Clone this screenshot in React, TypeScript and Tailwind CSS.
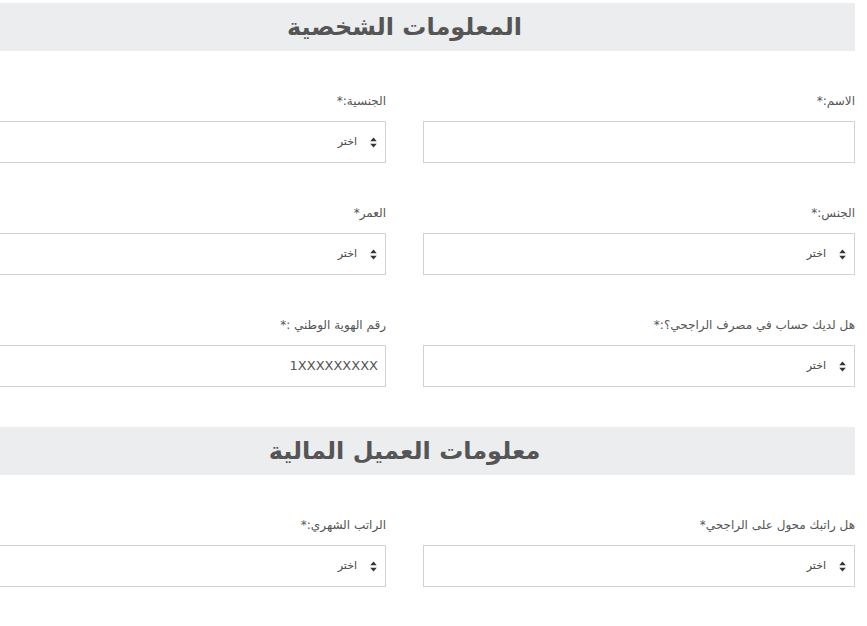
import React from "react";

const font = { fontFamily: '"DejaVu Sans", "Noto Sans", sans-serif' };

function SortIcon() {
  return (
    <svg width="7" height="11" viewBox="0 0 7 11" className="shrink-0">
      <path d="M3.5 0.5 L6.8 4.3 L0.2 4.3 Z" fill="#333" />
      <path d="M3.5 10.5 L6.8 6.7 L0.2 6.7 Z" fill="#333" />
    </svg>
  );
}

function Field({
  label,
  kind,
  value,
}: {
  label: string;
  kind: "text" | "select";
  value?: string;
}) {
  return (
    <div className="flex flex-col gap-[10px]">
      <label className="text-[12px] leading-[20px] text-[#555]">{label}</label>
      {kind === "select" ? (
        <div className="h-[42px] border border-[#d0d3d6] bg-white flex items-center gap-[13px] pr-[8px]">
          <SortIcon />
          <span className="text-[11px] text-[#444]">اختر</span>
        </div>
      ) : (
        <div className="h-[42px] border border-[#d0d3d6] bg-white flex items-center pr-[7px]">
          <span className="text-[13px] text-[#555]">{value}</span>
        </div>
      )}
    </div>
  );
}

function SectionTitle({ title }: { title: string }) {
  return (
    <div className="h-[48px] bg-[#ecedef] flex items-center justify-center">
      <h2 className="text-[24px] font-bold text-[#555]">{title}</h2>
    </div>
  );
}

export default function App() {
  return (
    <div dir="rtl" className="w-full min-h-[626px] bg-white overflow-hidden" style={font}>
      <div className="w-[901px] mr-[12px] pt-[3px] flex flex-col gap-10">
        <SectionTitle title="المعلومات الشخصية" />
        <div className="grid grid-cols-2 gap-x-[37px] gap-y-10">
          <Field label="الاسم:*" kind="text" />
          <Field label="الجنسية:*" kind="select" />
          <Field label="الجنس:*" kind="select" />
          <Field label="العمر*" kind="select" />
          <Field label="هل لديك حساب في مصرف الراجحي؟:*" kind="select" />
          <Field label="رقم الهوية الوطني :*" kind="text" value="1XXXXXXXXX" />
        </div>
        <SectionTitle title="معلومات العميل المالية" />
        <div className="grid grid-cols-2 gap-x-[37px] gap-y-10">
          <Field label="هل راتبك محول على الراجحي*" kind="select" />
          <Field label="الراتب الشهري:*" kind="select" />
        </div>
      </div>
    </div>
  );
}
